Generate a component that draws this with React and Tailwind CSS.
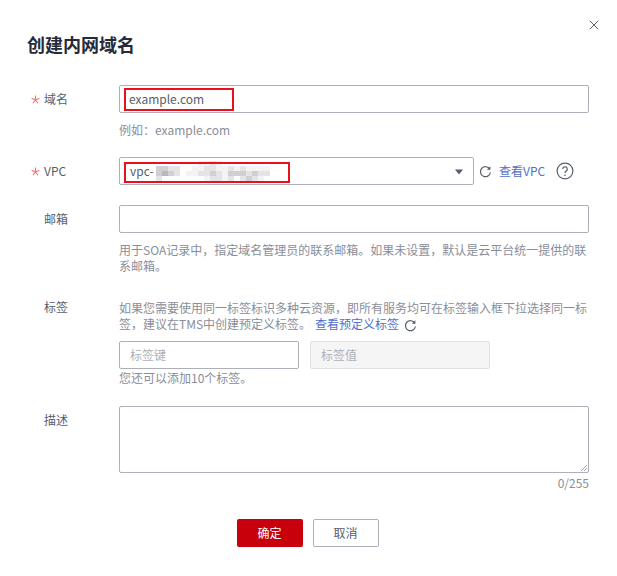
import { X } from 'lucide-react'

const font = { fontFamily: '"Noto Sans CJK SC", "Noto Sans", sans-serif' }

// 打码色块, 每行 19 格
const mosaic = [
  '0000000112100000000',
  '3322001122112121111',
  '3432011223213332322',
  '2000000012212023210',
]
const shades = ['bg-white', 'bg-[#f3f3f4]', 'bg-[#e4e4e6]', 'bg-[#d0d0d4]', 'bg-[#b8b8bd]']

function Refresh({ className }) {
  return (
    <svg className={className} width="13" height="13" viewBox="0 0 13 13" fill="none">
      <path d="M10.8 4.2A5 5 0 1 0 11.4 7.5" stroke="#575d6c" strokeWidth="1.2" />
      <path d="M11.4 1.2v3.6H7.8z" fill="#575d6c" />
    </svg>
  )
}

function Star() {
  return (
    <svg className="ml-[4px] mr-[4px]" width="9" height="9" viewBox="0 0 9 9" fill="none">
      <path d="M4.5 0.5v4.2M4.5 4.7L0.6 3.4M4.5 4.7L8.4 3.4M4.5 4.7L2 8.2M4.5 4.7L7 8.2" stroke="#f66f6a" strokeWidth="1.1" />
    </svg>
  )
}

function Row({ label, required, labelClass = 'h-7', className, children }) {
  return (
    <div className={`flex items-start ${className}`}>
      <div className={`w-[92px] shrink-0 flex items-center text-xs text-[#575d6c] ${labelClass}`}>
        {required ? <Star /> : <span className="w-[17px]"></span>}
        {label}
      </div>
      <div className="flex-1 min-w-0">{children}</div>
    </div>
  )
}

function Hint({ children, className }) {
  return <p className={`text-xs leading-4 text-[#8a8e99] ${className}`}>{children}</p>
}

export default function App() {
  return (
    <div className="relative w-[617px] h-[576px] bg-white pl-[27px] pr-7 pt-[31px]" style={font}>
      <button className="absolute right-[15px] top-[17px] text-[#575d6c]">
        <X size={16} strokeWidth={1.5} />
      </button>
      <h1 className="h-[26px] text-lg leading-[26px] font-bold text-[#252b3a]">创建内网域名</h1>

      <Row label="域名" required className="mt-[28px]">
        <div className="relative h-7 border border-[#adb0b8] rounded-[2px] pl-[9px] text-xs leading-[26px] text-[#575d6c]">
          example.com
          <div className="absolute left-1 top-[2px] w-[110px] h-[23px] border-2 border-[#e8101f]"></div>
        </div>
        <Hint className="mt-[9px]">例如：example.com</Hint>
      </Row>

      <Row label="VPC" required className="mt-[19px]">
        <div className="flex items-center">
          <div className="relative w-[355px] h-7 border border-[#adb0b8] rounded-[2px] pl-[10px] flex items-center text-xs text-[#575d6c]">
            vpc-
            <div className="ml-[2px] flex flex-col blur-[0.6px]">
              {mosaic.map((row, i) => (
                <div key={i} className="flex">
                  {row.split('').map((c, j) => (
                    <div key={j} className={`w-[6px] h-[5px] ${shades[Number(c)]}`}></div>
                  ))}
                </div>
              ))}
            </div>
            <svg className="absolute right-[9px] top-[11px]" width="10" height="6" viewBox="0 0 10 6">
              <path d="M1 0.5h8L5 5.5z" fill="#575d6c" />
            </svg>
            <div className="absolute left-1 top-[4px] w-[166px] h-[21px] border-2 border-[#e8101f]"></div>
          </div>
          <Refresh className="ml-[5px]" />
          <a className="ml-[7px] text-xs text-[#526ecc]">查看VPC</a>
          <svg className="ml-[11px] -mt-[1px]" width="18" height="18" viewBox="0 0 18 18" fill="none">
            <circle cx="9" cy="9" r="7.9" stroke="#575d6c" strokeWidth="1.2" />
            <path d="M6.7 7a2.3 2.3 0 1 1 3.6 2c-.9.5-1.3 1-1.3 2" stroke="#575d6c" strokeWidth="1.2" />
            <circle cx="9" cy="13.2" r="0.8" fill="#575d6c" />
          </svg>
        </div>
      </Row>

      <Row label="邮箱" className="mt-5">
        <div className="h-7 border border-[#adb0b8] rounded-[2px]"></div>
        <Hint className="mt-[9px]">
          用于SOA记录中，指定域名管理员的联系邮箱。如果未设置，默认是云平台统一提供的联系邮箱。
        </Hint>
      </Row>

      <Row label="标签" labelClass="h-4 mt-[1px]" className="mt-[24px]">
        <Hint className="pt-[2px]">
          如果您需要使用同一标签标识多种云资源，即所有服务均可在标签输入框下拉选择同一标签，建议在TMS中创建预定义标签。
          <a className="ml-[4px] text-[#526ecc]">查看预定义标签</a>
          <Refresh className="inline ml-[5px] align-[-3px]" />
        </Hint>
        <div className="mt-[9px] flex gap-[11px]">
          <div className="w-[180px] h-7 border border-[#adb0b8] rounded-[2px] pl-[10px] text-xs leading-[26px] text-[#adb0b8]">标签键</div>
          <div className="w-[180px] h-7 border border-[#dfe1e6] bg-[#f5f5f6] rounded-[2px] pl-[10px] text-xs leading-[26px] text-[#adb0b8]">标签值</div>
        </div>
        <Hint className="mt-[1px]">您还可以添加10个标签。</Hint>
      </Row>

      <Row label="描述" className="mt-[20px]">
        <div className="relative h-[67px] border border-[#adb0b8] rounded-[2px]">
          <svg className="absolute right-0 bottom-0" width="8" height="8" viewBox="0 0 8 8" fill="none">
            <path d="M1 7l6-6M4 7l3-3" stroke="#8a8e99" strokeWidth="0.8" />
          </svg>
        </div>
        <div className="mt-[2px] text-right text-xs leading-4 text-[#8a8e99]">0/255</div>
      </Row>

      <div className="mt-[28px] flex justify-center gap-[10px] pr-[1px]">
        <button className="w-[66px] h-7 rounded-[2px] bg-[#c7000b] text-xs text-white">确定</button>
        <button className="w-[66px] h-7 rounded-[2px] border border-[#adb0b8] text-xs text-[#575d6c]">取消</button>
      </div>
    </div>
  )
}
